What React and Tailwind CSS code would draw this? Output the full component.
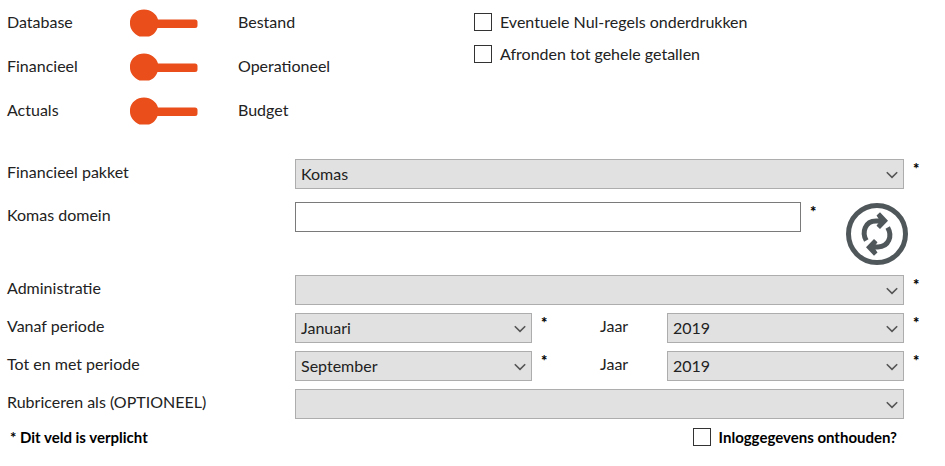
import React, { useState } from 'react';

const months = [
  'Januari', 'Februari', 'Maart', 'April', 'Mei', 'Juni',
  'Juli', 'Augustus', 'September', 'Oktober', 'November', 'December',
];
const years = ['2017', '2018', '2019', '2020'];

const Toggle = ({ left, right }) => {
  const [on, setOn] = useState(false);

  return (
    <div className="grid grid-cols-[122px_109px_1fr] items-center h-7">
      <span className="leading-7 -mt-0.5">{left}</span>
      <button
        type="button"
        role="switch"
        aria-checked={on}
        aria-label={`${left} / ${right}`}
        onClick={() => setOn(!on)}
        className={on ? 'w-[70px] -scale-x-100' : 'w-[70px]'}
      >
        <svg viewBox="0 0 70 28" className="block w-[70px] h-7" fill="#e94e1b">
          <path d="M10.500 27.500 C5 25 1 20 1 15 V12 C2 5 8 .5 15 .5 S27.500 5 29 10.500 H66 Q68.500 10.500 68.500 13 V16.500 Q68.500 19 66 19 H28.500 C27 23 24 26.500 20 27.500 Z" />
        </svg>
      </button>
      <span className="leading-7 -mt-0.5">{right}</span>
    </div>
  );
};

const CheckBox = ({ children }) => (
  <label className="flex items-center gap-2">
    <input type="checkbox" className="appearance-none w-[18px] h-[18px] border border-[#333] bg-white checked:bg-[#333]" />
    <span>{children}</span>
  </label>
);

const Select = ({ id, options = [], value = '' }) => (
  <div className="relative">
    <select
      id={id}
      defaultValue={value}
      className="appearance-none block w-full h-[30px] pl-[5px] pr-8 border border-[#adadad] bg-[#e1e1e1] text-[#222]"
    >
      {value === '' && <option value=""></option>}
      {options.map((option) => (
        <option key={option}>{option}</option>
      ))}
    </select>
    <svg
      viewBox="0 0 12 8"
      className="absolute right-1.5 top-3 w-3 h-2 pointer-events-none"
      fill="none"
      stroke="#555"
      strokeWidth="1.6"
    >
      <path d="M.8 1.200 L6 6.400 L11.200 1.200" />
    </svg>
  </div>
);

const Star = () => (
  <span className="pl-[9px] font-black text-[15px] leading-[18px] text-black">*</span>
);

const Row = ({ id, label, required, children }) => (
  <div className="grid grid-cols-[288px_1fr_41px] h-[30px]">
    <label htmlFor={id} className="leading-[26px]">{label}</label>
    {children}
    {required && <Star />}
  </div>
);

const PeriodRow = ({ id, label, month }) => (
  <Row id={id} label={label} required>
    <div className="grid grid-cols-[1fr_68px_67px_1fr]">
      <Select id={id} options={months} value={month} />
      <Star />
      <label htmlFor={`${id}-jaar`} className="leading-[26px]">Jaar</label>
      <Select id={`${id}-jaar`} options={years} value="2019" />
    </div>
  </Row>
);

const RefreshIcon = () => (
  <svg viewBox="0 0 62 62" className="block w-[62px] h-[62px]" fill="none" stroke="#50575b" strokeWidth="5">
    <circle cx="31" cy="31" r="28.500" />
    <g id="arrow">
      <path d="M20.300 37.500 C15.500 29 19 18.200 30 18 H37" />
      <path d="M30.500 12.500 L34 9.300 L42 17.700 L34 26 L30.500 22.800 L32.500 20 V15.500 Z" fill="#50575b" stroke="none" />
    </g>
    <use href="#arrow" transform="rotate(180 31 31)" />
  </svg>
);

const App = () => {
  return (
    <form className="bg-white pt-[9px] pb-4 pl-[7px] font-['Lato',sans-serif] text-base leading-5 text-[#222]">
      <div className="grid grid-cols-[467px_1fr]">
        <div className="flex flex-col gap-4">
          <Toggle left="Database" right="Bestand" />
          <Toggle left="Financieel" right="Operationeel" />
          <Toggle left="Actuals" right="Budget" />
        </div>
        <div className="flex flex-col gap-3 pt-[3px]">
          <CheckBox>Eventuele Nul-regels onderdrukken</CheckBox>
          <CheckBox>Afronden tot gehele getallen</CheckBox>
        </div>
      </div>

      <div className="flex flex-col gap-2 mt-[34px]">
        <Row id="pakket" label="Financieel pakket" required>
          <Select id="pakket" options={['Komas']} value="Komas" />
        </Row>

        <div className="grid grid-cols-[288px_1fr_144px] pt-[5px] h-[70px]">
          <label htmlFor="domein" className="leading-[26px]">Komas domein</label>
          <input id="domein" type="text" className="w-full h-[30px] px-[5px] border border-[#7a7a7a] bg-white" />
          <div className="flex items-start justify-between pr-[37px]">
            <Star />
            <button type="button" aria-label="Vernieuwen" className="mt-px">
              <RefreshIcon />
            </button>
          </div>
        </div>

        <Row id="administratie" label="Administratie" required>
          <Select id="administratie" />
        </Row>
        <PeriodRow id="vanaf" label="Vanaf periode" month="Januari" />
        <PeriodRow id="tot" label="Tot en met periode" month="September" />
        <Row id="rubriceren" label="Rubriceren als (OPTIONEEL)">
          <Select id="rubriceren" />
        </Row>
      </div>

      <div className="flex justify-between mt-2 pl-[3px] pr-12 text-[15px] leading-5 font-bold text-black">
        <p>* Dit veld is verplicht</p>
        <CheckBox>Inloggegevens onthouden?</CheckBox>
      </div>
    </form>
  );
};

export default App;
